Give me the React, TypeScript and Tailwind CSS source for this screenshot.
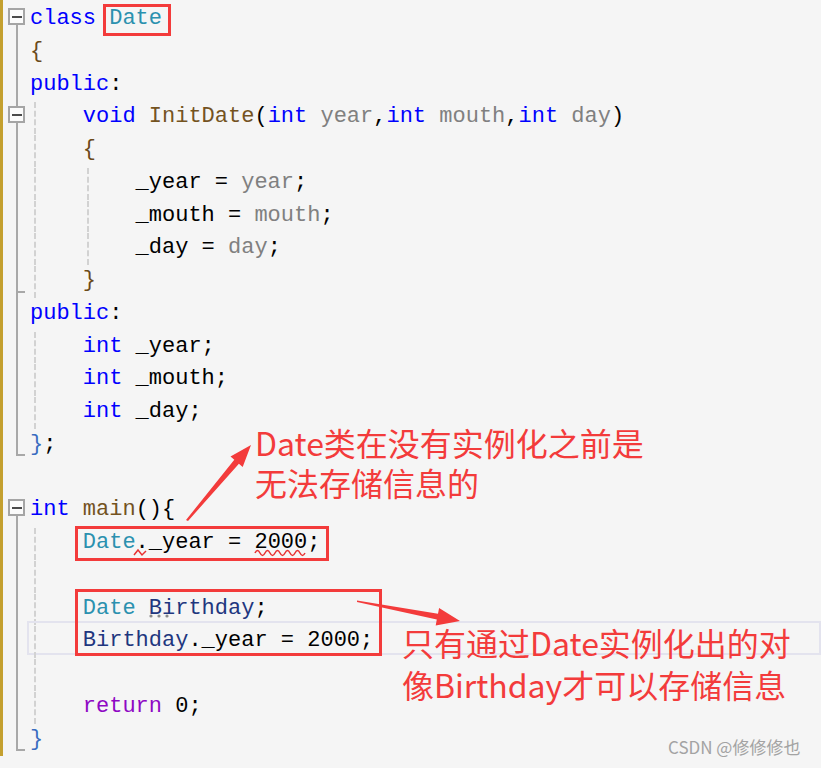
import React from "react";

type Tok = [string, string?];
type Fold = "open" | "box" | "mid" | "endmid" | "end" | "none";
type Line = { fold: Fold; ind?: number; guides?: number; toks: Tok[] };

const KW = "text-[#0000ff]";
const TY = "text-[#2b91af]";
const FN = "text-[#74531f]";
const PA = "text-[#808080]";
const VA = "text-[#1f377f]";
const RT = "text-[#8f08c4]";
const BR = "text-[#6b4a1a]";
const BB = "text-[#3a6cc0]";

const CODE: Line[] = [
  { fold: "open", toks: [["class ", KW], ["Date", TY]] },
  { fold: "mid", toks: [["{", BR]] },
  { fold: "mid", toks: [["public", KW], [":"]] },
  { fold: "box", ind: 1, guides: 1, toks: [["void", KW], [" "], ["InitDate", FN], ["("], ["int", KW], [" "], ["year", PA], [","], ["int", KW], [" "], ["mouth", PA], [","], ["int", KW], [" "], ["day", PA], [")"]] },
  { fold: "mid", ind: 1, guides: 1, toks: [["{", BR]] },
  { fold: "mid", ind: 2, guides: 2, toks: [["_year = "], ["year", PA], [";"]] },
  { fold: "mid", ind: 2, guides: 2, toks: [["_mouth = "], ["mouth", PA], [";"]] },
  { fold: "mid", ind: 2, guides: 2, toks: [["_day = "], ["day", PA], [";"]] },
  { fold: "endmid", ind: 1, guides: 1, toks: [["}", BR]] },
  { fold: "mid", toks: [["public", KW], [":"]] },
  { fold: "mid", ind: 1, guides: 1, toks: [["int", KW], [" _year;"]] },
  { fold: "mid", ind: 1, guides: 1, toks: [["int", KW], [" _mouth;"]] },
  { fold: "mid", ind: 1, guides: 1, toks: [["int", KW], [" _day;"]] },
  { fold: "end", toks: [["}", BB], [";"]] },
  { fold: "none", toks: [] },
  { fold: "open", toks: [["int", KW], [" "], ["main", FN], ["(){"]] },
  { fold: "mid", ind: 1, guides: 1, toks: [["Date", TY], ["._year = 2000;"]] },
  { fold: "mid", ind: 1, guides: 1, toks: [] },
  { fold: "mid", ind: 1, guides: 1, toks: [["Date", TY], [" "], ["Birthday", VA], [";"]] },
  { fold: "mid", ind: 1, guides: 1, toks: [["Birthday", VA], ["._year = 2000;"]] },
  { fold: "mid", ind: 1, guides: 1, toks: [] },
  { fold: "mid", ind: 1, guides: 1, toks: [["return", RT], [" 0;"]] },
  { fold: "end", toks: [["}", BB]] },
];

const LINE_COLOR = "bg-[#a8a8a8]";

const Box = () => (
  <div className="w-[17px] h-[17px] -ml-[8px] shrink-0 border-2 border-[#a5a5a5] bg-[#fbfbfb] flex items-center justify-center">
    <div className="w-[10px] h-[2px] bg-[#4a4a4a]" />
  </div>
);

const Gutter = ({ fold }: { fold: Fold }) => {
  return (
    <div className="w-[27px] h-full shrink-0 flex flex-col items-start pl-[13px]">
      {fold === "open" && (
        <>
          <div className="h-[5px]" />
          <Box />
          <div className={`flex-1 w-[2px] ${LINE_COLOR}`} />
        </>
      )}
      {fold === "box" && (
        <>
          <div className={`h-[5px] w-[2px] ${LINE_COLOR}`} />
          <Box />
          <div className={`flex-1 w-[2px] ${LINE_COLOR}`} />
        </>
      )}
      {fold === "mid" && <div className={`h-full w-[2px] ${LINE_COLOR}`} />}
      {fold === "endmid" && (
        <>
          <div className={`h-[26px] w-[2px] ${LINE_COLOR}`} />
          <div className={`h-[2px] w-[9px] ${LINE_COLOR}`} />
          <div className={`flex-1 w-[2px] ${LINE_COLOR}`} />
        </>
      )}
      {fold === "end" && (
        <>
          <div className={`h-[25px] w-[2px] ${LINE_COLOR}`} />
          <div className={`h-[2px] w-[9px] ${LINE_COLOR}`} />
        </>
      )}
    </div>
  );
};

const Indent = ({ guide }: { guide: boolean }) => (
  <span className="inline-block w-[52.8px] h-[32.75px] align-top pl-[4px] pt-[1px]">
    {guide && <span className="block h-full border-l-2 border-dashed border-[#d2d2d2]" />}
  </span>
);

const App: React.FC = () => {
  return (
    <div className="relative w-[821px] h-[768px] overflow-hidden bg-[#f5f5f5]">
      {/* editor */}
      <div className="border-l-[3px] border-[#c4a02f] pt-[3px] font-['Liberation_Mono',monospace] text-[22px] text-black">
        {CODE.map((line, i) => (
          <div key={i} className="flex h-[32.75px]">
            <Gutter fold={line.fold} />
            <div className="relative flex-1 leading-[32.75px] whitespace-pre">
              {i === 19 && (
                <div className="absolute -left-[3px] right-0 -top-[4px] h-[34px] border-2 border-[#e3e3ee]" />
              )}
              <span className="relative">
                {Array.from({ length: line.ind ?? 0 }).map((_, k) => (
                  <Indent key={k} guide={k < (line.guides ?? 0)} />
                ))}
                {line.toks.map(([t, c], j) => (
                  <span key={j} className={c ?? "text-black"}>
                    {t}
                  </span>
                ))}
              </span>
            </div>
          </div>
        ))}
      </div>

      {/* annotation boxes */}
      <div className="absolute left-[103px] top-[4px] w-[68px] h-[32px] border-[3px] border-[#f33b3b]" />
      <div className="absolute left-[75px] top-[526px] w-[254px] h-[35px] border-[3px] border-[#f33b3b]" />
      <div className="absolute left-[75px] top-[589px] w-[307px] h-[67px] border-[3px] border-[#f33b3b]" />

      {/* squiggles, hint dots, arrows */}
      <svg className="absolute inset-0 pointer-events-none" width="821" height="768">
        <path d="M134 555 L138 550 L142 555 L146 551" fill="none" stroke="#e83030" strokeWidth="1.5" />
        <path
          d="M255 553 Q257.5 548 260 553 T265 553 T270 553 T275 553 T280 553 T285 553 T290 553 T295 553 T300 553 T305 553"
          fill="none"
          stroke="#e83030"
          strokeWidth="1.5"
        />
        <circle cx="151" cy="616" r="1.6" fill="#8a8a8a" />
        <circle cx="159" cy="616" r="1.6" fill="#8a8a8a" />
        <circle cx="167" cy="616" r="1.6" fill="#8a8a8a" />
        <polygon
          points="186,520 234.3,459.7 230.5,456.5 251,445 242.7,466.9 238.9,463.7 188,521"
          fill="#f33b3b"
        />
        <polygon
          points="357,600.5 438,613.8 439.1,607.9 460,621 435.7,625.5 436.8,619.6 357,602"
          fill="#f33b3b"
        />
      </svg>

      {/* notes */}
      <div className="absolute left-[255px] top-[422px] flex flex-col text-[32px] leading-[40px] text-[#f33b3b] font-['Noto_Sans_CJK_SC',sans-serif] whitespace-nowrap">
        <span>Date类在没有实例化之前是</span>
        <span>无法存储信息的</span>
      </div>
      <div className="absolute left-[402px] top-[621px] flex flex-col text-[32px] leading-[42px] text-[#f33b3b] font-['Noto_Sans_CJK_SC',sans-serif] whitespace-nowrap">
        <span>只有通过Date实例化出的对</span>
        <span>像Birthday才可以存储信息</span>
      </div>
      <div className="absolute left-[668px] top-[737px] text-[17px] leading-[20px] text-[#a3a3a3] font-['Noto_Sans_CJK_SC',sans-serif] whitespace-nowrap">
        CSDN @修修修也
      </div>
    </div>
  );
};

export default App;
